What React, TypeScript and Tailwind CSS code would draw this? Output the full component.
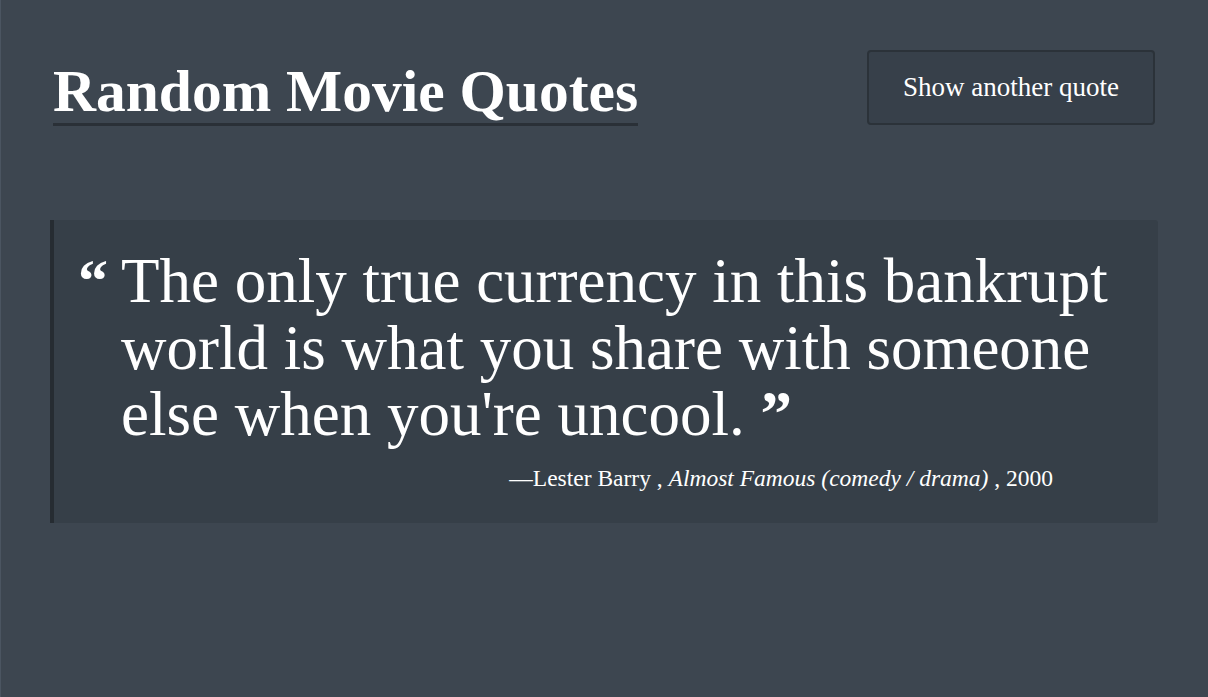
export default function App() {
  return (
    <div className="min-h-screen bg-[#3d4650] border-l border-[#4b5561] pl-[49px] pr-[50px] pt-[50px] font-['Liberation_Serif',serif] text-white">
      {/* Header */}
      <header className="flex items-start justify-between">
        <h1 className="mt-[9px] ml-[3px] text-[59.5px] leading-[64px] font-bold border-b-[3px] border-[#2a3037]">
          Random Movie Quotes
        </h1>
        <button className="mr-[3px] w-[288px] h-[75px] rounded-[4px] border-2 border-[#2b3239] bg-[#37404a] text-[27px] leading-none text-white">
          Show another quote
        </button>
      </header>

      {/* Quote */}
      <blockquote className="mt-[94px] bg-[#363f48] border-l-4 border-[#262c32] rounded-r-[3px] pt-[28px] pb-[30px]">
        <div className="flex pl-[24px]">
          <span className="w-[43px] shrink-0 text-[60px] leading-[66.5px] font-bold">“</span>
          <p className="text-[63px] leading-[66.5px]">
            The only true currency in this bankrupt
            <br />
            world is what you share with someone
            <br />
            else when you're uncool. <span className="font-bold">”</span>
          </p>
        </div>
        <p className="mt-[15px] pr-[105px] text-right text-[23.5px] leading-[30px]">
          —Lester Barry , <em>Almost Famous (comedy / drama)</em> , 2000
        </p>
      </blockquote>
    </div>
  );
}
